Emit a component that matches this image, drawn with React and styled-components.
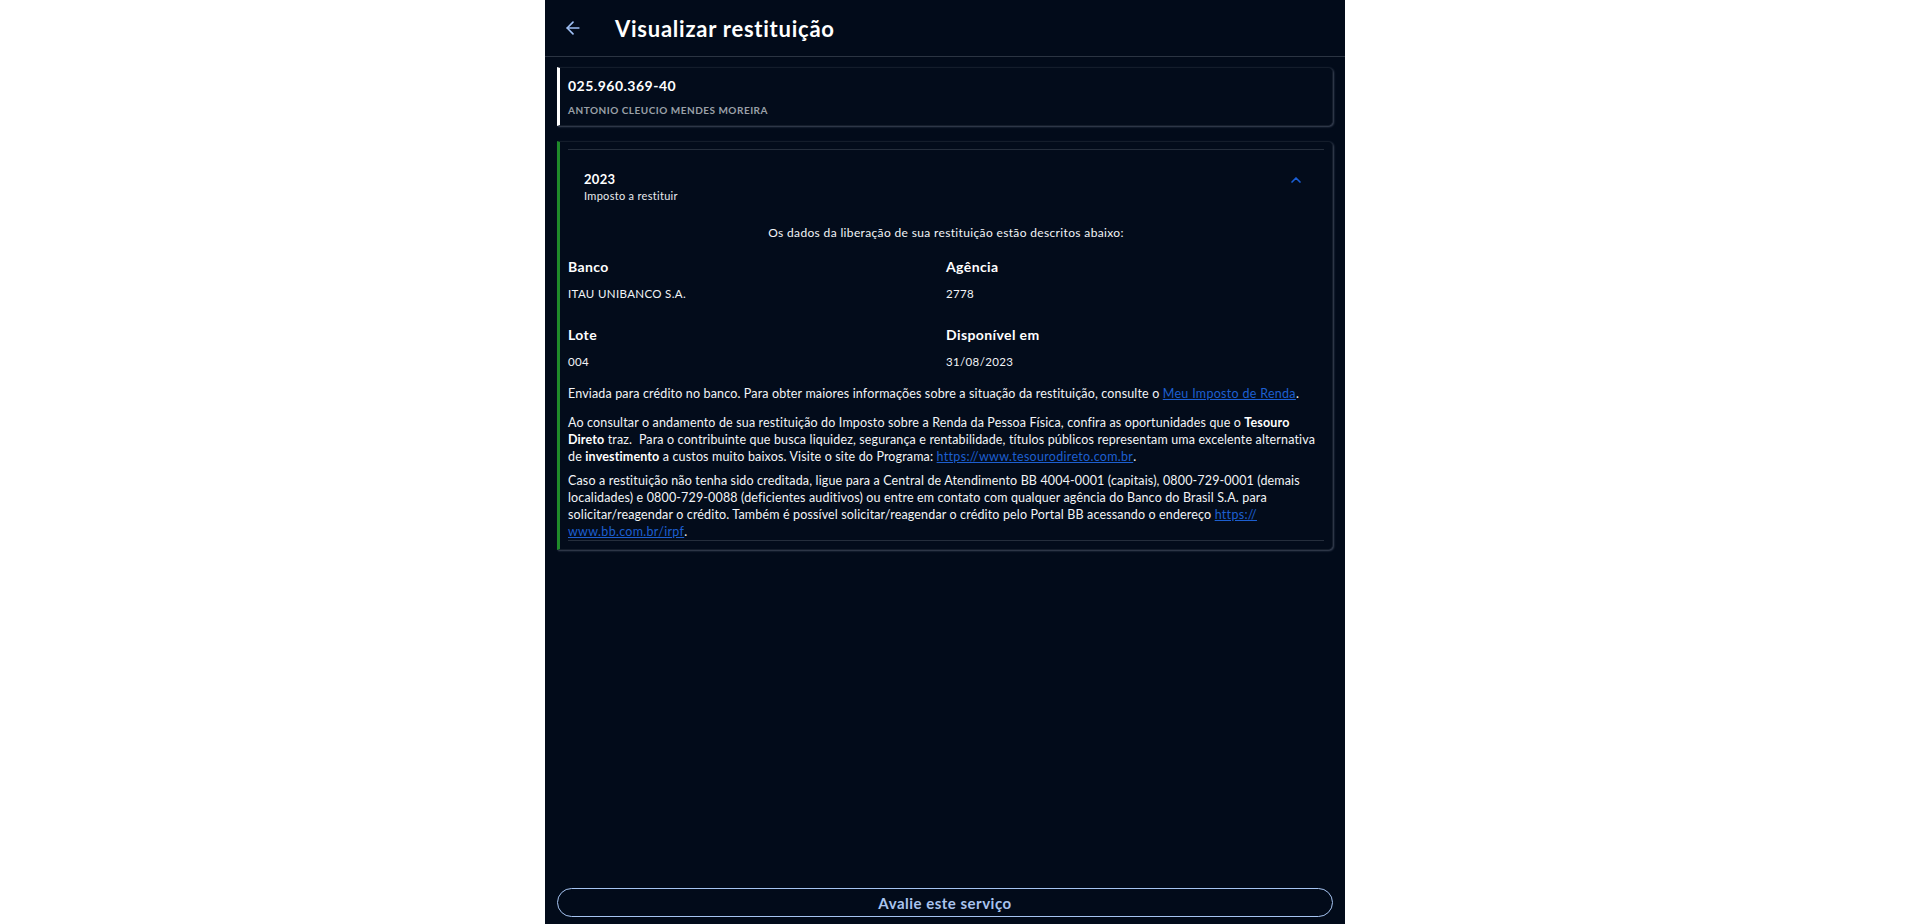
import React from 'react';
import styled, { createGlobalStyle } from 'styled-components';
import { ArrowLeft, ChevronUp } from 'lucide-react';

const GlobalStyle = createGlobalStyle`
  html, body {
    margin: 0;
    padding: 0;
    background: #ffffff;
    font-family: Lato, "Open Sans", "Liberation Sans", sans-serif;
  }
`;

const Page = styled.div`
  padding-right: 15px;
  display: flex;
  justify-content: center;
`;

const Panel = styled.div`
  width: 800px;
  min-height: 100vh;
  background: #020b1a;
  color: #f2f4f7;
  display: flex;
  flex-direction: column;
  box-sizing: border-box;
`;

const Header = styled.header`
  height: 57px;
  display: flex;
  align-items: center;
  border-bottom: 1px solid #2b3442;
  box-sizing: border-box;
  padding-left: 18px;
`;

const BackButton = styled.button`
  background: none;
  border: none;
  padding: 0;
  color: #9fc0f5;
  display: flex;
  align-items: center;
  cursor: pointer;
  margin-right: 32px;
`;

const Title = styled.h1`
  margin: 0;
  font-size: 22px;
  font-weight: 700;
  color: #ffffff;
  letter-spacing: 0.75px;
`;

const Content = styled.main`
  flex: 1;
  padding: 10px 12px 0;
  display: flex;
  flex-direction: column;
  gap: 15px;
`;

const Card = styled.section`
  border: 1px solid #141d2b;
  border-left: 3px solid ${p => p.$accent};
  border-radius: 0 5px 5px 0;
  box-shadow: 1px 1px 2px rgba(110, 120, 140, 0.55);
  background: #030c1b;
`;

const IdCard = styled(Card)`
  padding: 9px 8px 8px;
`;

const Cpf = styled.div`
  font-size: 14px;
  font-weight: 700;
  color: #ffffff;
  line-height: 18px;
  letter-spacing: 0.5px;
`;

const Name = styled.div`
  margin-top: 8px;
  font-size: 10px;
  font-weight: 700;
  color: #9aa0a8;
  line-height: 14px;
  letter-spacing: 0.5px;
`;

const Accordion = styled(Card)`
  padding: 7px 8px 8px 8px;
`;

const AccordionInner = styled.div`
  border-top: 1px solid #252e3c;
  border-bottom: 1px solid #252e3c;
`;

const AccordionHead = styled.div`
  display: flex;
  align-items: center;
  justify-content: space-between;
  padding: 21px 20px 0 16px;
`;

const Year = styled.div`
  font-size: 13px;
  font-weight: 700;
  color: #ffffff;
  line-height: 17px;
  letter-spacing: 0.3px;
`;

const Sub = styled.div`
  font-size: 11px;
  color: #e8ebef;
  line-height: 16px;
  letter-spacing: 0.3px;
`;

const Chevron = styled.span`
  color: #1a5fd6;
  display: flex;
  margin-top: -15px;
`;

const Intro = styled.p`
  margin: 21px 0 0;
  text-align: center;
  font-size: 12px;
  line-height: 16px;
  letter-spacing: 0.35px;
`;

const Fields = styled.div`
  display: grid;
  grid-template-columns: 1fr 1fr;
  row-gap: 24px;
  margin-top: 16px;
`;

const Field = styled.div`
  display: flex;
  flex-direction: column;
  gap: 9px;
`;

const Label = styled.div`
  font-size: 14px;
  font-weight: 700;
  color: #ffffff;
  line-height: 20px;
  letter-spacing: 0.4px;
`;

const Value = styled.div`
  font-size: 11.5px;
  line-height: 15px;
  letter-spacing: 0.35px;
`;

const Para = styled.p`
  margin: ${p => p.$top}px 0 0;
  font-size: 12.5px;
  line-height: 17px;
  letter-spacing: 0.15px;
  color: #f2f4f7;

  strong { font-weight: 700; color: #ffffff; }
`;

const Link = styled.a`
  color: #1d5fd0;
  text-decoration: underline;
  letter-spacing: 0.3px;
`;

const Footer = styled.div`
  padding: 12px 12px 7px;
`;

const RateButton = styled.button`
  width: 100%;
  height: 29px;
  border: 1px solid #a6c4f2;
  border-radius: 999px;
  background: transparent;
  color: #a9c3ee;
  font-family: inherit;
  font-size: 15px;
  font-weight: 700;
  letter-spacing: 0.5px;
  cursor: pointer;
`;

const fields = [
  { label: 'Banco', value: 'ITAU UNIBANCO S.A.' },
  { label: 'Agência', value: '2778' },
  { label: 'Lote', value: '004' },
  { label: 'Disponível em', value: '31/08/2023' },
];

export default function App() {
  return (
    <>
      <GlobalStyle />
      <Page>
        <Panel>
          <Header>
            <BackButton aria-label="Voltar"><ArrowLeft size={20} strokeWidth={2} /></BackButton>
            <Title>Visualizar restituição</Title>
          </Header>
          <Content>
            <IdCard $accent="#ffffff">
              <Cpf>025.960.369-40</Cpf>
              <Name>ANTONIO CLEUCIO MENDES MOREIRA</Name>
            </IdCard>
            <Accordion $accent="#1f8a2a">
              <AccordionInner>
                <AccordionHead>
                  <div>
                    <Year>2023</Year>
                    <Sub>Imposto a restituir</Sub>
                  </div>
                  <Chevron><ChevronUp size={16} strokeWidth={2.5} /></Chevron>
                </AccordionHead>
                <Intro>Os dados da liberação de sua restituição estão descritos abaixo:</Intro>
                <Fields>
                  {fields.map(f => (
                    <Field key={f.label}>
                      <Label>{f.label}</Label>
                      <Value>{f.value}</Value>
                    </Field>
                  ))}
                </Fields>
                <Para $top={16}>
                  Enviada para crédito no banco. Para obter maiores informações sobre a situação da restituição, consulte o <Link href="#">Meu Imposto de Renda</Link>.
                </Para>
                <Para $top={12}>
                  Ao consultar o andamento de sua restituição do Imposto sobre a Renda da Pessoa Física, confira as oportunidades que o <strong>Tesouro Direto</strong> traz.&nbsp; Para o contribuinte que busca liquidez, segurança e rentabilidade, títulos públicos representam uma excelente alternativa de <strong>investimento</strong> a custos muito baixos. Visite o site do Programa: <Link href="#">https://www.tesourodireto.com.br</Link>.
                </Para>
                <Para $top={7}>
                  Caso a restituição não tenha sido creditada, ligue para a Central de Atendimento BB 4004-0001 (capitais), 0800-729-0001 (demais localidades) e 0800-729-0088 (deficientes auditivos) ou entre em contato com qualquer agência do Banco do Brasil S.A. para solicitar/reagendar o crédito. Também é possível solicitar/reagendar o crédito pelo Portal BB acessando o endereço <Link href="#">https://<wbr />www.bb.com.br/irpf</Link>.
                </Para>
              </AccordionInner>
            </Accordion>
          </Content>
          <Footer>
            <RateButton>Avalie este serviço</RateButton>
          </Footer>
        </Panel>
      </Page>
    </>
  );
}
